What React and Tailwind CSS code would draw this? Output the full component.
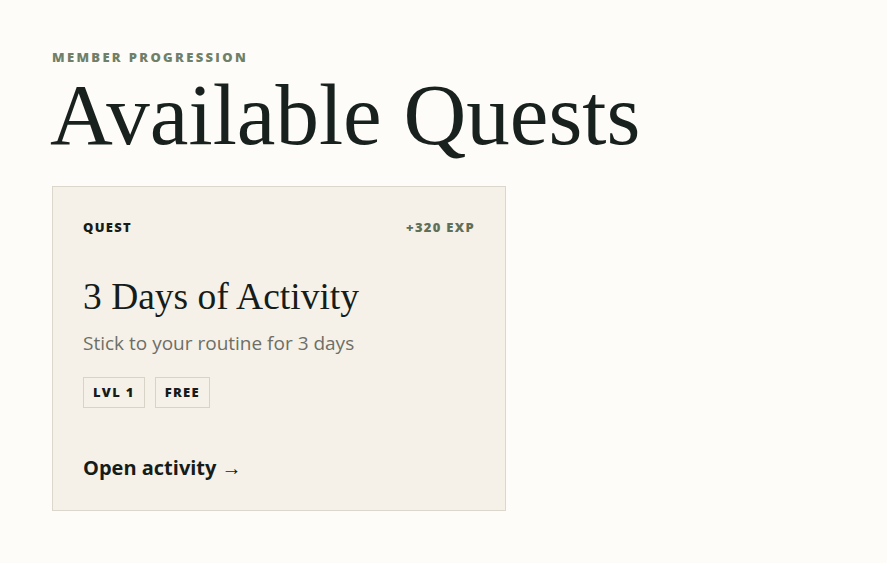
// QuestsPage.jsx
const serif = "font-['Georgia','Liberation_Serif',serif]";
const sans = "font-['Open_Sans','Noto_Sans',sans-serif]";

function Tag({ children }) {
  return (
    <span
      className={`${sans} border border-[#d8d3c7] px-[9px] h-[31px] flex items-center text-[13px] font-extrabold tracking-[0.1em] text-[#161c19]`}
    >
      {children}
    </span>
  );
}

function QuestCard({ reward, title, description, tags }) {
  return (
    <div className="w-[454px] h-[325px] border border-[#dcd7cc] bg-[#f5f1e8] px-[30px] pt-[31px] flex flex-col">
      {/* HEADER */}
      <div className={`${sans} flex items-center justify-between text-[13px] font-extrabold tracking-[0.1em]`}>
        <span className="text-[#161c19]">QUEST</span>
        <span className="text-[#5f7058]">{reward}</span>
      </div>

      <h2 className={`${serif} mt-[36px] text-[37.5px] leading-[48px] text-[#161c19]`}>
        {title}
      </h2>
      <p className={`${sans} mt-[8px] text-[19px] leading-[28px] text-[#6d6e66]`}>
        {description}
      </p>

      <div className="mt-[20px] flex gap-[10px]">
        {tags.map((t) => (
          <Tag key={t}>{t}</Tag>
        ))}
      </div>

      <a className={`${sans} mt-[45px] text-[20px] font-bold text-[#161c19]`}>
        Open activity →
      </a>
    </div>
  );
}

export default function App() {
  return (
    <div className="min-h-screen bg-[#fdfcf8] px-[52px] pt-[48px]">
      <div className={`${sans} text-[13px] font-extrabold tracking-[0.18em] text-[#6f8069]`}>
        MEMBER PROGRESSION
      </div>
      <h1 className={`${serif} -ml-[2px] text-[87px] leading-[94px] text-[#18211d]`}>
        Available Quests
      </h1>
      <div className="mt-[24px]">
        <QuestCard
          reward="+320 EXP"
          title="3 Days of Activity"
          description="Stick to your routine for 3 days"
          tags={["LVL 1", "FREE"]}
        />
      </div>
    </div>
  );
}
